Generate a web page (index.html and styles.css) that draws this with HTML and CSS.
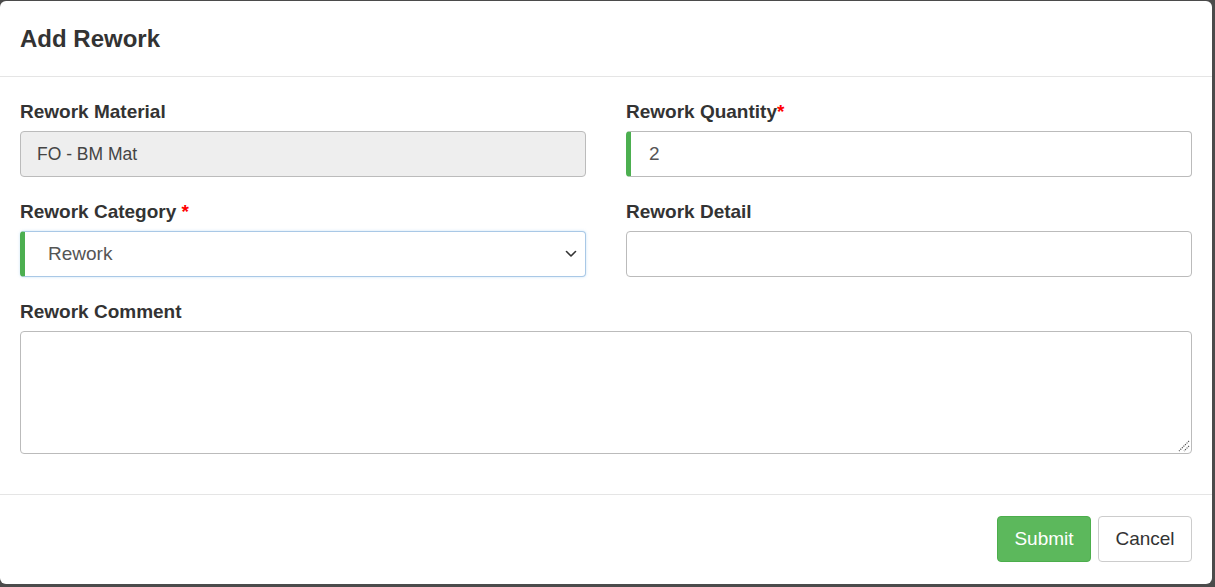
FILE: index.html
```html
<!DOCTYPE html>
<html>
<head>
<meta charset="utf-8">
<link rel="stylesheet" href="styles.css">
</head>
<body>
<div class="modal">
  <div class="modal-header">
    <h4 class="modal-title">Add Rework</h4>
  </div>
  <div class="modal-body">
    <div class="grid">
      <div class="group">
        <label class="lbl">Rework Material</label>
        <div class="field disabled">FO - BM Mat</div>
      </div>
      <div class="group">
        <label class="lbl">Rework Quantity<span class="req">*</span></label>
        <div class="field valid qty">2</div>
      </div>
      <div class="group">
        <label class="lbl">Rework Category <span class="req">*</span></label>
        <div class="field valid select">
          <span class="sel-text">Rework</span>
          <svg class="chev" width="12" height="8" viewBox="0 0 12 8"><path d="M1.5 1.5 L6 6 L10.5 1.5" fill="none" stroke="#333" stroke-width="1.6" stroke-linecap="round" stroke-linejoin="round"/></svg>
        </div>
      </div>
      <div class="group">
        <label class="lbl">Rework Detail</label>
        <div class="field"></div>
      </div>
      <div class="group full">
        <label class="lbl">Rework Comment</label>
        <div class="field textarea">
          <svg class="grip" width="13" height="13" viewBox="0 0 13 13"><path d="M12 2 L2 12 M12 7 L7 12" stroke="#555" stroke-width="1.2" stroke-dasharray="1.2 1" fill="none"/></svg>
        </div>
      </div>
    </div>
  </div>
  <div class="modal-footer">
    <button class="btn btn-success">Submit</button>
    <button class="btn btn-default">Cancel</button>
  </div>
</div>
</body>
</html>
```
FILE: styles.css
```css
html, body {
  margin: 0;
  padding: 0;
}
body {
  background: #4b4b4b;
  width: 1215px;
  height: 587px;
  overflow: hidden;
  font-family: "Liberation Sans", Arial, sans-serif;
  color: #333;
  padding-top: 1px;
  box-sizing: border-box;
}
.modal {
  width: 1212px;
  height: 583px;
  background: #fff;
  border-radius: 6px;
  display: flex;
  flex-direction: column;
  box-sizing: border-box;
}
.modal-header {
  height: 75px;
  flex: none;
  border-bottom: 1px solid #e5e5e5;
  padding: 0 20px;
  display: flex;
  align-items: center;
}
.modal-title {
  margin: 0;
  font-size: 24px;
  font-weight: bold;
  color: #333;
}
.modal-body {
  padding: 22px 20px 0 20px;
  flex: 1;
}
.grid {
  display: grid;
  grid-template-columns: 566px 566px;
  column-gap: 40px;
}
.group {
  margin-bottom: 22px;
}
.group.full {
  grid-column: 1 / span 2;
  margin-bottom: 0;
}
.lbl {
  display: block;
  font-size: 19px;
  font-weight: bold;
  line-height: 26px;
  margin-bottom: 6px;
  color: #333;
}
.req {
  color: #f00;
}
.field {
  height: 46px;
  box-sizing: border-box;
  border: 1px solid #bbb;
  border-radius: 4px;
  background: #fff;
  font-size: 19px;
  line-height: 44px;
  padding: 0 16px;
  color: #555;
  position: relative;
}
.field.disabled {
  background: #eee;
  color: #444;
  font-size: 17.5px;
}
.field.valid {
  border-left: 5px solid #4caf50;
}
.field.qty {
  padding-left: 18px;
}
.field.select {
  border-color: #a9c8e6;
  border-left-color: #4caf50;
  box-shadow: 0 0 3px rgba(102, 175, 233, 0.35);
  padding-left: 23px;
  display: flex;
  align-items: center;
  justify-content: space-between;
  padding-right: 8px;
}
.sel-text {
  line-height: 44px;
}
.field.textarea {
  height: 123px;
}
.grip {
  position: absolute;
  right: 1px;
  bottom: 1px;
}
.modal-footer {
  flex: none;
  border-top: 1px solid #e5e5e5;
  padding: 21px 20px 0 20px;
  height: 90px;
  box-sizing: border-box;
  display: flex;
  justify-content: flex-end;
  align-items: flex-start;
  gap: 7px;
}
.btn {
  height: 46px;
  font-family: "Liberation Sans", Arial, sans-serif;
  font-size: 19px;
  border-radius: 4px;
  padding: 0 10px;
  border: 1px solid transparent;
  cursor: pointer;
}
.btn-success {
  background: #5cb85c;
  border-color: #4cae4c;
  color: #fff;
  width: 94px;
}
.btn-default {
  background: #fff;
  border-color: #ccc;
  color: #333;
  width: 94px;
}
```
